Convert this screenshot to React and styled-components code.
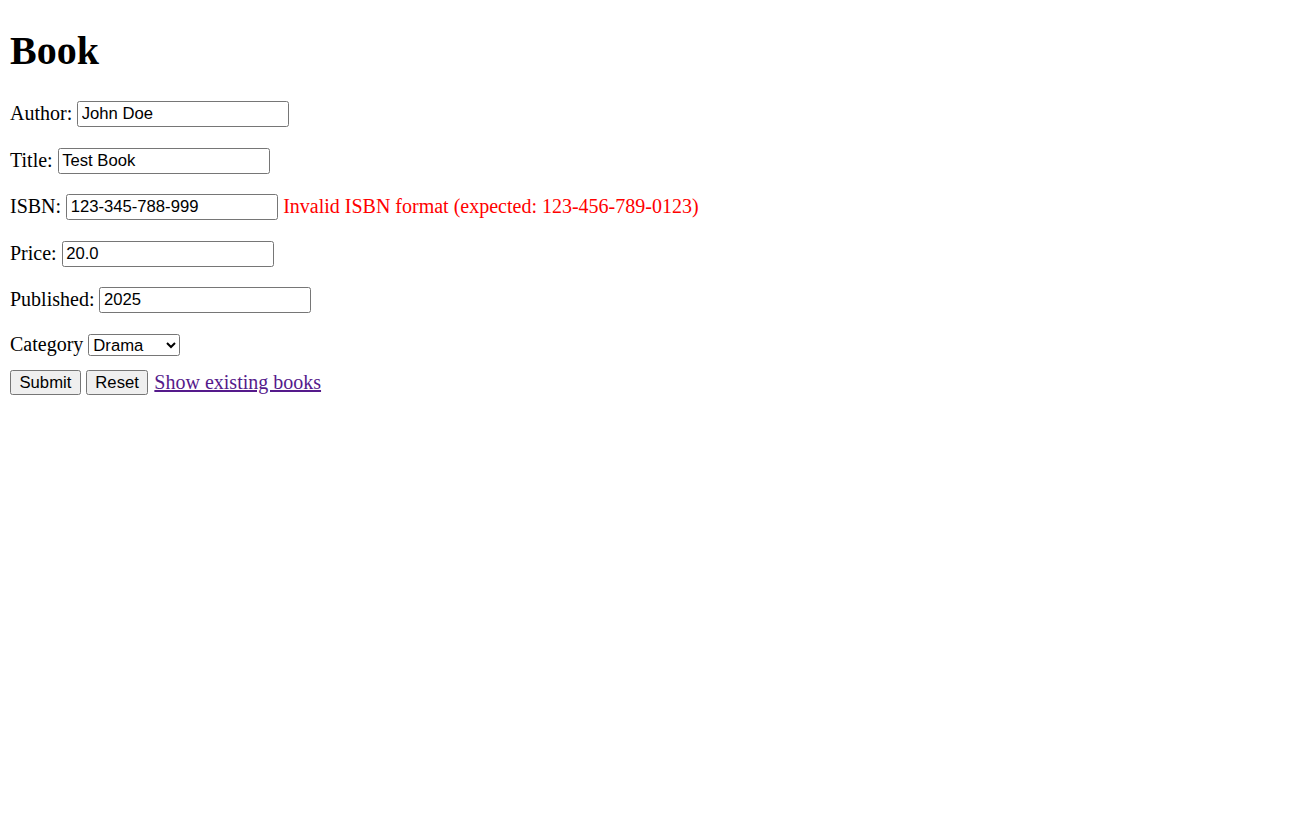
import React from "react";
import styled, { createGlobalStyle } from "styled-components";

const GlobalStyle = createGlobalStyle`
	html, body {
		background: #fff;
	}
	body {
		margin: 10px;
		font-family: "Liberation Serif", "Times New Roman", serif;
		font-size: 20px;
		color: #000;
	}
`;

const Page = styled.div`
	display: flex;
	flex-direction: column;
	align-items: flex-start;
`;

const Heading = styled.h1`
	font-size: 40px;
	font-weight: bold;
	margin: 18px 0 27px;
	line-height: 46px;
`;

const Form = styled.form`
	display: flex;
	flex-direction: column;
	align-items: flex-start;
`;

const Row = styled.div`
	display: flex;
	align-items: center;
	height: ${(p) => (p.$tight ? "22px" : "26px")};
	margin-bottom: ${(p) => (p.$tight ? "14.5px" : "20.5px")};
	white-space: pre;
`;

const Label = styled.label`
	line-height: 24px;
	padding-bottom: 2px;
`;

const TextInput = styled.input`
	box-sizing: border-box;
	width: 212px;
	height: 26px;
	margin: 0 0 0 5px;
	padding: 1px 3.5px;
	border: 1px solid #767676;
	border-radius: 2.5px;
	font-family: "Liberation Sans", Arial, sans-serif;
	font-size: 16.67px;
	color: #000;
	background: #fff;
	outline: none;
`;

const Select = styled.select`
	box-sizing: border-box;
	width: 92px;
	height: 22px;
	margin: 0 0 0 5px;
	border: 1px solid #767676;
	border-radius: 2.5px;
	font-family: "Liberation Sans", Arial, sans-serif;
	font-size: 16.67px;
	color: #000;
	background: #fff;
`;

const Error = styled.span`
	color: #f00;
	margin-left: 5px;
	line-height: 24px;
	padding-bottom: 2px;
`;

const Actions = styled.div`
	display: flex;
	align-items: center;
	gap: 5px;
`;

const Button = styled.button`
	box-sizing: border-box;
	height: 25px;
	padding: 1px 8.5px;
	border: 1px solid #767676;
	border-radius: 2.5px;
	background: #efefef;
	font-family: "Liberation Sans", Arial, sans-serif;
	font-size: 16.67px;
	color: #000;
`;

const Link = styled.a`
	margin-left: 1px;
	color: #551a8b;
	text-decoration: underline;
	cursor: pointer;
`;

const fields = [
	{ label: "Author:", value: "John Doe" },
	{ label: "Title:", value: "Test Book" },
	{ label: "ISBN:", value: "123-345-788-999", error: "Invalid ISBN format (expected: 123-456-789-0123)" },
	{ label: "Price:", value: "20.0" },
	{ label: "Published:", value: "2025" },
];

export default function App() {
	return (
		<Page>
			<GlobalStyle />
			<Heading>Book</Heading>
			<Form onSubmit={(e) => e.preventDefault()}>
				{fields.map((f) => (
					<Row key={f.label}>
						<Label>{f.label}</Label>
						<TextInput type="text" defaultValue={f.value} />
						{f.error && <Error>{f.error}</Error>}
					</Row>
				))}
				<Row $tight>
					<Label>Category</Label>
					<Select defaultValue="Drama">
						<option>Drama</option>
						<option>Comedy</option>
						<option>Fiction</option>
					</Select>
				</Row>
				<Actions>
					<Button type="submit">Submit</Button>
					<Button type="reset">Reset</Button>
					<Link href="#">Show existing books</Link>
				</Actions>
			</Form>
		</Page>
	);
}
